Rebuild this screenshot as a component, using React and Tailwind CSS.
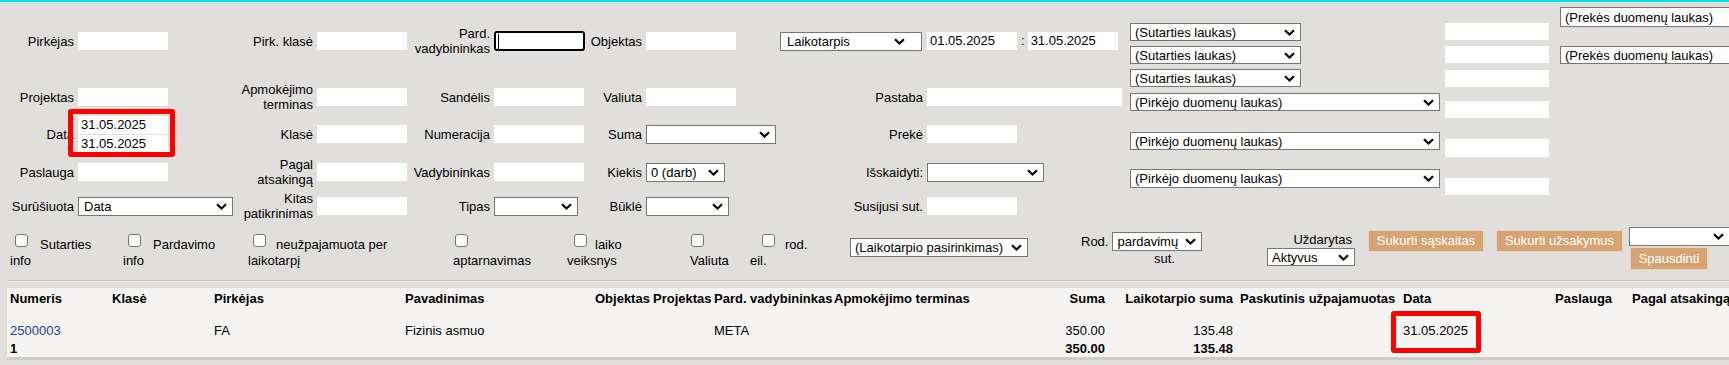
import React from "react";

const Chevron = () => (
  <svg width="11" height="7" viewBox="0 0 11 7" className="shrink-0">
    <path d="M1 1.2l4.5 4.3L10 1.2" fill="none" stroke="#000" strokeWidth="2.2" />
  </svg>
);

function Sel({ className = "", children }) {
  return (
    <div
      className={
        "bg-white border border-[#767676] flex items-center justify-between pl-[4px] pr-[5px] whitespace-nowrap overflow-hidden shrink-0 " +
        className
      }
    >
      <span className="leading-[15px]">{children}</span>
      <Chevron />
    </div>
  );
}

function Inp({ className = "w-[90px] h-[18px]", children }) {
  return (
    <div className={"bg-white flex items-center pl-[3px] whitespace-nowrap shrink-0 " + className}>
      {children}
    </div>
  );
}

function L({ children }) {
  return (
    <div className="flex items-center justify-end text-right pr-[4px] leading-[15px] whitespace-nowrap">
      {children}
    </div>
  );
}

function C({ children, className = "" }) {
  return <div className={"flex items-center " + className}>{children}</div>;
}

const Cb = ({ className = "" }) => (
  <div
    className={
      "w-[13px] h-[13px] bg-white border border-[#767676] rounded-[3px] shrink-0 " + className
    }
  />
);

const Btn = ({ className = "", children }) => (
  <div
    className={
      "bg-[#d5a472] text-white border border-[#ead6bf] flex items-center justify-center whitespace-nowrap shrink-0 " +
      className
    }
  >
    {children}
  </div>
);

function CheckItem({ w, cbMl, textMl, line1, line2 }) {
  return (
    <div className={"pt-[12px] shrink-0 " + w}>
      <div className="flex items-end h-[19px]">
        <Cb className={"mb-[6px] " + cbMl} />
        {line1 ? <span className={"leading-[16px] whitespace-nowrap " + textMl}>{line1}</span> : null}
      </div>
      <div className="leading-[16px] whitespace-nowrap">{line2}</div>
    </div>
  );
}

const cols =
  "grid grid-cols-[102px_102px_191px_190px_58px_61px_120px_150px_127px_128px_164px_152px_77px_200px] leading-[16px] whitespace-nowrap";

function TRow({ cells, className = "" }) {
  const align = [
    "pl-[3px]",
    "pl-[3px]",
    "pl-[3px]",
    "pl-[3px]",
    "pl-[3px]",
    "pl-[3px]",
    "pl-[3px]",
    "pl-[3px]",
    "text-right pr-[3px]",
    "text-right pr-[3px]",
    "pl-[4px]",
    "pl-[3px]",
    "pl-[3px]",
    "pl-[3px]",
  ];
  return (
    <div className={cols + " " + className}>
      {cells.map((c, i) => (
        <div key={i} className={align[i]}>
          {c}
        </div>
      ))}
    </div>
  );
}

export default function App() {
  return (
    <div className="relative w-[1729px] h-[365px] overflow-hidden bg-[#e1dfdc] text-[13px] text-black font-['Liberation_Sans',Arial,sans-serif]">
      <div className="h-[2px] bg-[#00e6e6]" />

      {/* Top form */}
      <div className="flex h-[220px] w-[1850px]">
        <div className="grid grid-cols-[78px_162px_77px_93px_84px_93px_59px_132px_149px_198px] grid-rows-[78px_34px_40px_36px_32px] w-[1125px] shrink-0">
          {/* Row 1 */}
          <L>Pirkėjas</L>
          <C><Inp /></C>
          <L>Pirk. klasė</L>
          <C><Inp /></C>
          <L>
            Pard.
            <br />
            vadybininkas
          </L>
          <C>
            <div className="w-[91px] h-[20px] bg-white border-2 border-black rounded-[3px] flex items-center pl-[2px]">
              <div className="w-[1px] h-[15px] bg-black" />
            </div>
          </C>
          <L>Objektas</L>
          <C><Inp /></C>
          <C className="pl-[2px]">
            <Sel className="w-[142px] h-[19px] pl-[6px] pr-[16px]">Laikotarpis</Sel>
          </C>
          <C>
            <Inp>01.05.2025</Inp>
            <span className="ml-[4px] mr-[3px]">:</span>
            <Inp>31.05.2025</Inp>
          </C>

          {/* Row 2 */}
          <L>Projektas</L>
          <C><Inp /></C>
          <L>
            Apmokėjimo
            <br />
            terminas
          </L>
          <C><Inp /></C>
          <L>Sandėlis</L>
          <C><Inp /></C>
          <L>Valiuta</L>
          <C><Inp /></C>
          <L>Pastaba</L>
          <C><Inp className="w-[195px] h-[18px]" /></C>

          {/* Row 3 */}
          <L>Data</L>
          <C>
            <div className="flex flex-col">
              <div className="flex items-center">
                <Inp>31.05.2025</Inp>
                <span className="ml-[4px]">:</span>
              </div>
              <Inp>31.05.2025</Inp>
            </div>
          </C>
          <L>Klasė</L>
          <C><Inp /></C>
          <L>Numeracija</L>
          <C><Inp /></C>
          <L>Suma</L>
          <C><Sel className="w-[130px] h-[19px]" /></C>
          <L>Prekė</L>
          <C><Inp /></C>

          {/* Row 4 */}
          <L>Paslauga</L>
          <C><Inp /></C>
          <L>
            Pagal
            <br />
            atsakingą
          </L>
          <C><Inp /></C>
          <L>Vadybininkas</L>
          <C><Inp /></C>
          <L>Kiekis</L>
          <C><Sel className="w-[79px] h-[19px]">0 (darb)</Sel></C>
          <L>Išskaidyti:</L>
          <C><Sel className="w-[117px] h-[19px]" /></C>

          {/* Row 5 */}
          <L>Surūšiuota</L>
          <C><Sel className="w-[155px] h-[19px] pl-[5px]">Data</Sel></C>
          <L>
            Kitas
            <br />
            patikrinimas
          </L>
          <C><Inp /></C>
          <L>Tipas</L>
          <C><Sel className="w-[84px] h-[19px]" /></C>
          <L>Būklė</L>
          <C><Sel className="w-[83px] h-[19px]" /></C>
          <L>Susijusi sut.</L>
          <C><Inp /></C>
        </div>

        {/* Column F */}
        <div className="flex flex-col ml-[5px] w-[310px] shrink-0">
          <Sel className="mt-[21px] w-[171px] h-[18px] pl-[3px]">(Sutarties laukas)</Sel>
          <Sel className="mt-[5px] w-[171px] h-[18px] pl-[3px]">(Sutarties laukas)</Sel>
          <Sel className="mt-[5px] w-[171px] h-[18px] pl-[3px]">(Sutarties laukas)</Sel>
          <Sel className="mt-[6px] w-[310px] h-[18px] pl-[3px]">(Pirkėjo duomenų laukas)</Sel>
          <Sel className="mt-[21px] w-[310px] h-[18px] pl-[3px]">(Pirkėjo duomenų laukas)</Sel>
          <Sel className="mt-[19px] w-[310px] h-[19px] pl-[3px]">(Pirkėjo duomenų laukas)</Sel>
        </div>

        {/* Column G */}
        <div className="flex flex-col ml-[5px] w-[104px] shrink-0">
          <Inp className="mt-[21px] w-[104px] h-[17px]" />
          <Inp className="mt-[6px] w-[104px] h-[17px]" />
          <Inp className="mt-[7px] w-[104px] h-[17px]" />
          <Inp className="mt-[14px] w-[104px] h-[17px]" />
          <Inp className="mt-[21px] w-[104px] h-[18px]" />
          <Inp className="mt-[21px] w-[104px] h-[17px]" />
        </div>

        {/* Column H */}
        <div className="flex flex-col ml-[11px] w-[190px] shrink-0">
          <Sel className="mt-[5px] w-[190px] h-[20px] pl-[3px]">(Prekės duomenų laukas)</Sel>
          <Sel className="mt-[19px] w-[190px] h-[18px] pl-[3px]">(Prekės duomenų laukas)</Sel>
        </div>
      </div>

      {/* Checkbox row */}
      <div className="flex h-[56px] pl-[10px] w-[1850px]">
        <CheckItem w="w-[113px]" cbMl="ml-[5px]" textMl="ml-[12px]" line1="Sutarties" line2="info" />
        <CheckItem w="w-[125px]" cbMl="ml-[5px]" textMl="ml-[12px]" line1="Pardavimo" line2="info" />
        <CheckItem
          w="w-[205px]"
          cbMl="ml-[5px]"
          textMl="ml-[10px]"
          line1="neužpajamuota per"
          line2="laikotarpį"
        />
        <CheckItem w="w-[114px]" cbMl="ml-[2px]" textMl="" line1={null} line2="aptarnavimas" />
        <CheckItem w="w-[123px]" cbMl="ml-[7px]" textMl="ml-[8px]" line1="laiko" line2="veiksnys" />
        <CheckItem w="w-[60px]" cbMl="ml-[1px]" textMl="" line1={null} line2="Valiuta" />
        <CheckItem w="w-[100px]" cbMl="ml-[12px]" textMl="ml-[10px]" line1="rod." line2="eil." />

        <div className="w-[231px] pt-[16px] shrink-0">
          <Sel className="w-[178px] h-[19px] pl-[4px] pr-[4px]">(Laikotarpio pasirinkimas)</Sel>
        </div>

        <div className="w-[186px] pt-[10px] shrink-0">
          <div className="flex items-center h-[19px]">
            <span>Rod.</span>
            <Sel className="ml-[4px] w-[90px] h-[19px]">pardavimų</Sel>
          </div>
          <div className="leading-[16px] pl-[73px]">sut.</div>
        </div>

        <div className="w-[101px] pt-[10px] shrink-0">
          <div className="w-[88px] text-right pr-[3px] leading-[16px]">Uždarytas</div>
          <Sel className="w-[88px] h-[18px]">Aktyvus</Sel>
        </div>

        <div className="pt-[8px] shrink-0">
          <Btn className="w-[116px] h-[22px]">Sukurti sąskaitas</Btn>
        </div>
        <div className="pt-[8px] ml-[12px] shrink-0">
          <Btn className="w-[127px] h-[22px]">Sukurti užsakymus</Btn>
        </div>
        <div className="pt-[5px] ml-[6px] shrink-0">
          <Sel className="w-[101px] h-[19px]" />
          <Btn className="ml-[1px] mt-[1px] w-[78px] h-[23px]">Spausdinti</Btn>
        </div>
      </div>

      {/* Divider */}
      <div className="ml-[8px] mt-[2px] h-[1px] bg-[#c3c1bd]" />
      <div className="ml-[8px] h-[1px] bg-[#efeeec]" />

      {/* Table panel */}
      <div className="ml-[7px] mt-[6px] h-[72px] w-[1800px] bg-[#f5f4f2] border-b-[3px] border-[#cfcdca] pt-[3px]">
        <TRow
          className="font-bold"
          cells={[
            "Numeris",
            "Klasė",
            "Pirkėjas",
            "Pavadinimas",
            "Objektas",
            "Projektas",
            "Pard. vadybininkas",
            "Apmokėjimo terminas",
            "Suma",
            "Laikotarpio suma",
            "Paskutinis užpajamuotas",
            "Data",
            "Paslauga",
            "Pagal atsakingą",
          ]}
        />
        <TRow
          className="mt-[16px]"
          cells={[
            <span className="text-[#2b3b9e]">2500003</span>,
            "",
            "FA",
            "Fizinis asmuo",
            "",
            "",
            "META",
            "",
            "350.00",
            "135.48",
            "",
            "31.05.2025",
            "",
            "",
          ]}
        />
        <TRow
          className="font-bold mt-[2px]"
          cells={["1", "", "", "", "", "", "", "", "350.00", "135.48", "", "", "", ""]}
        />
      </div>

      {/* Red annotation boxes */}
      <div className="absolute left-[68px] top-[109px] w-[107px] h-[48px] border-[5px] border-[#ff0000] rounded-[3px]" />
      <div className="absolute left-[1391px] top-[311px] w-[90px] h-[42px] border-[5px] border-[#ff0000] rounded-[3px]" />
    </div>
  );
}
